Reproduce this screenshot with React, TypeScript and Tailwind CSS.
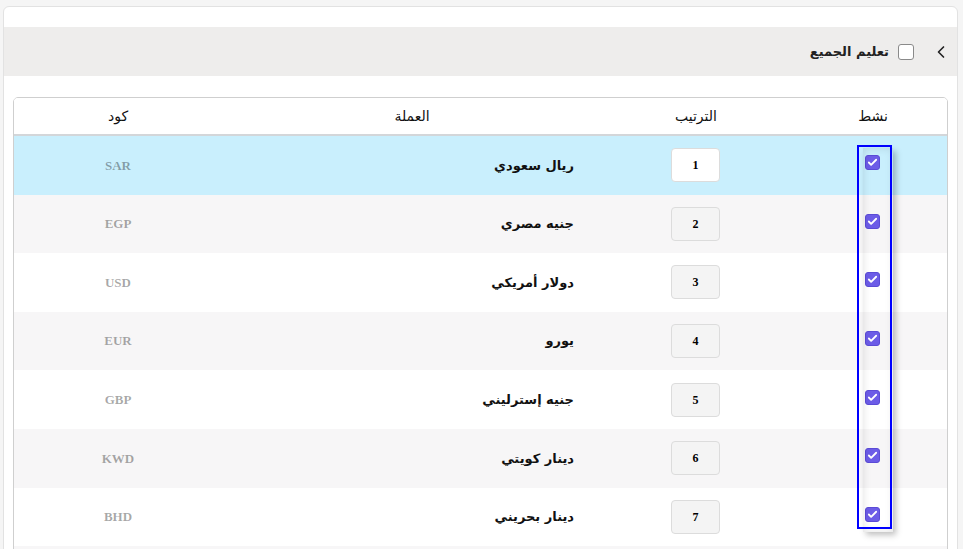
import { ChevronLeft, Check } from 'lucide-react';

const currencies = [
  { order: 1, name: 'ريال سعودي', code: 'SAR' },
  { order: 2, name: 'جنيه مصري', code: 'EGP' },
  { order: 3, name: 'دولار أمريكي', code: 'USD' },
  { order: 4, name: 'يورو', code: 'EUR' },
  { order: 5, name: 'جنيه إسترليني', code: 'GBP' },
  { order: 6, name: 'دينار كويتي', code: 'KWD' },
  { order: 7, name: 'دينار بحريني', code: 'BHD' },
  { order: 8, name: 'ريال قطري', code: 'QAR' },
];

const ActiveBox = () => (
  <span className="flex h-[15px] w-[15px] items-center justify-center rounded-[3px] bg-[#6c5ce7] border border-[#5b4bd6]">
    <Check size={11} strokeWidth={4} className="text-white" />
  </span>
);

const Row = ({ item, index }: { item: typeof currencies[number]; index: number }) => {
  const bg = index === 0 ? 'bg-[#c9effd]' : index % 2 === 1 ? 'bg-[#f7f6f7]' : 'bg-white';
  return (
    <div className={`flex h-[58.6px] items-center ${bg}`}>
      <div className="flex w-[148px] justify-center pb-[5px] pr-[1px]">
        <ActiveBox />
      </div>
      <div className="flex w-[206px] justify-center pr-[1px]">
        <div
          className={`flex h-[34px] w-[49px] items-center justify-center rounded-[4px] border border-[#dcdcdc] text-[12px] font-bold text-black ${index === 0 ? 'bg-white' : 'bg-[#f4f4f4]'}`}
          style={{ fontFamily: '"Liberation Serif", serif' }}
        >
          {item.order}
        </div>
      </div>
      <div className="w-[362px] pr-[19px] text-right text-[13px] font-bold text-[#111]">
        {item.name}
      </div>
      <div
        className="flex-1 pr-[9px] text-center text-[13px] font-bold text-black/35"
        style={{ fontFamily: '"Liberation Serif", serif' }}
      >
        {item.code}
      </div>
    </div>
  );
};

export default function App() {
  return (
    <div className="min-h-screen bg-[#f5f5f5] pl-[3px] pr-[5px] pt-[6px]" style={{ fontFamily: '"DejaVu Sans", "Noto Sans", sans-serif' }}>
      <div dir="rtl" className="overflow-hidden rounded-t-[6px] border border-[#e2e2e2] bg-white pb-4">
        <div className="mt-[20px] flex h-[49px] items-center bg-[#eeedec] pr-[6px]">
          <ChevronLeft size={20} strokeWidth={2} className="text-[#222]" />
          <span className="mr-[17px] h-[16px] w-[16px] rounded-[3px] border border-[#8a8a8a] bg-white" />
          <span className="mr-[9px] text-[13px] font-bold text-[#222]">تعليم الجميع</span>
        </div>

        <div className="relative mx-[9px] mt-[21px] overflow-hidden rounded-t-[5px] border border-[#cfcfcf]">
          <div className="flex h-[38px] items-center border-b-2 border-[#d3d6d9] bg-white text-[14px] text-[#111]">
            <div className="w-[148px] text-center">نشط</div>
            <div className="w-[206px] text-center">الترتيب</div>
            <div className="w-[362px] text-center">العملة</div>
            <div className="flex-1 pr-[9px] text-center">كود</div>
          </div>
          {currencies.map((c, i) => (
            <Row key={c.code} item={c} index={i} />
          ))}

          {/* drag ghost over the active column */}
          <div className="pointer-events-none absolute right-[54px] top-[50px] h-[384px] w-[30px] shadow-[inset_0_0_8px_rgba(0,0,0,0.12),3px_3px_6px_rgba(0,0,0,0.25)]" />
          <div className="pointer-events-none absolute right-[55px] top-[47px] h-[384px] w-[35px] border-2 border-[#0000ff]" />
        </div>
      </div>
    </div>
  );
}
